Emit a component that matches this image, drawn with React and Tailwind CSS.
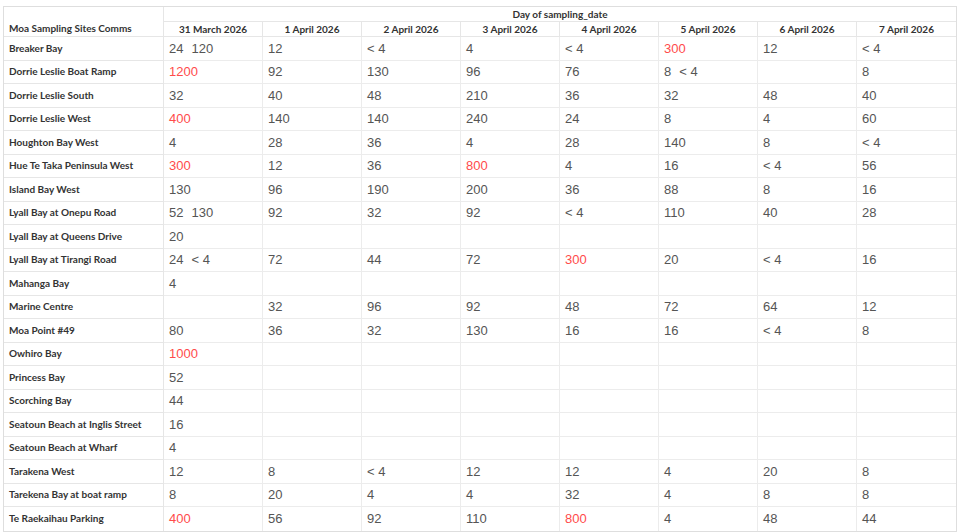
import React from 'react';

const dates = [
  '31 March 2026',
  '1 April 2026',
  '2 April 2026',
  '3 April 2026',
  '4 April 2026',
  '5 April 2026',
  '6 April 2026',
  '7 April 2026'
];

// each cell: '' | string | array of strings (several samples on one day)
const rows = [
  ['Breaker Bay', [['24', '120'], '12', '< 4', '4', '< 4', '300', '12', '< 4']],
  ['Dorrie Leslie Boat Ramp', ['1200', '92', '130', '96', '76', ['8', '< 4'], '', '8']],
  ['Dorrie Leslie South', ['32', '40', '48', '210', '36', '32', '48', '40']],
  ['Dorrie Leslie West', ['400', '140', '140', '240', '24', '8', '4', '60']],
  ['Houghton Bay West', ['4', '28', '36', '4', '28', '140', '8', '< 4']],
  ['Hue Te Taka Peninsula West', ['300', '12', '36', '800', '4', '16', '< 4', '56']],
  ['Island Bay West', ['130', '96', '190', '200', '36', '88', '8', '16']],
  ['Lyall Bay at Onepu Road', [['52', '130'], '92', '32', '92', '< 4', '110', '40', '28']],
  ['Lyall Bay at Queens Drive', ['20', '', '', '', '', '', '', '']],
  ['Lyall Bay at Tirangi Road', [['24', '< 4'], '72', '44', '72', '300', '20', '< 4', '16']],
  ['Mahanga Bay', ['4', '', '', '', '', '', '', '']],
  ['Marine Centre', ['', '32', '96', '92', '48', '72', '64', '12']],
  ['Moa Point #49', ['80', '36', '32', '130', '16', '16', '< 4', '8']],
  ['Owhiro Bay', ['1000', '', '', '', '', '', '', '']],
  ['Princess Bay', ['52', '', '', '', '', '', '', '']],
  ['Scorching Bay', ['44', '', '', '', '', '', '', '']],
  ['Seatoun Beach at Inglis Street', ['16', '', '', '', '', '', '', '']],
  ['Seatoun Beach at Wharf', ['4', '', '', '', '', '', '', '']],
  ['Tarakena West', ['12', '8', '< 4', '12', '12', '4', '20', '8']],
  ['Tarekena Bay at boat ramp', ['8', '20', '4', '4', '32', '4', '8', '8']],
  ['Te Raekaihau Parking', ['400', '56', '92', '110', '800', '4', '48', '44']]
];

const isHigh = (v) => {
  const n = parseInt(v, 10);
  return !isNaN(n) && n >= 280;
};

const Value = ({ v }) => (
  <span className={isHigh(v) ? 'text-[#ff4b4b]' : 'text-[#555555]'}>{v}</span>
);

const App = () => {
  return (
    <div className="w-[960px] h-[532px] bg-white pt-[6px] pl-[3px]">
      <div
        className="w-[954px] grid grid-cols-[160px_repeat(8,1fr)] border-t border-l border-r border-b border-[#dedede]"
        style={{ fontFamily: 'Lato, "Noto Sans", sans-serif' }}
      >
        <div className="row-span-2 border-r border-b border-[#e6e6e6] flex items-end px-[5px] text-[10px] leading-[15px] font-bold text-[#333333]">
          Moa Sampling Sites Comms
        </div>
        <div className="col-span-8 h-[15px] border-b border-[#e6e6e6] flex items-center justify-center text-[10px] font-bold text-[#333333]">
          Day of sampling_date
        </div>
        {dates.map((d, i) => (
          <div
            key={d}
            className={`h-[15px] border-b border-[#e6e6e6] flex items-center justify-center text-[10px] font-bold text-[#333333] ${
              i < 7 ? 'border-r' : ''
            }`}
          >
            {d}
          </div>
        ))}

        {rows.map(([site, values], r) => (
          <React.Fragment key={site}>
            <div
              className={`h-[23.5px] border-r border-[#e6e6e6] flex items-center px-[5px] text-[10px] font-bold text-[#333333] ${
                r < rows.length - 1 ? 'border-b' : ''
              }`}
            >
              {site}
            </div>
            {values.map((v, c) => (
              <div
                key={c}
                className={`h-[23.5px] border-[#ececec] flex items-center gap-[8px] px-[5px] text-[13px] ${
                  c < 7 ? 'border-r' : ''
                } ${r < rows.length - 1 ? 'border-b' : ''}`}
                style={{ fontFamily: '"Liberation Sans", Arial, sans-serif' }}
              >
                {Array.isArray(v) ? v.map((x, k) => <Value key={k} v={x} />) : <Value v={v} />}
              </div>
            ))}
          </React.Fragment>
        ))}
      </div>
    </div>
  );
};

export default App;
